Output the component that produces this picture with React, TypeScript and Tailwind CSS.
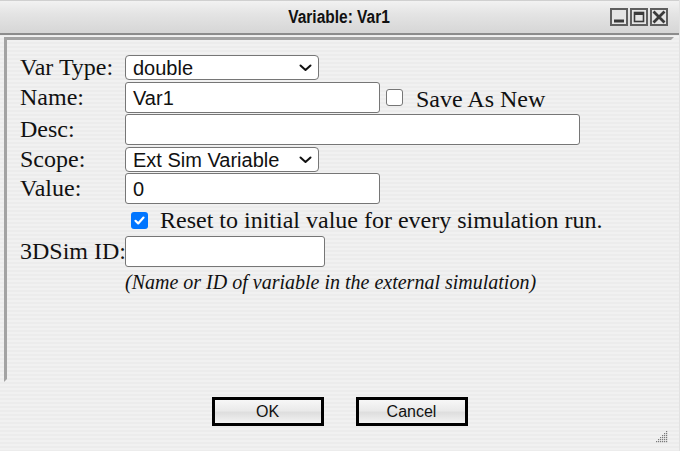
import React from "react";

const serif = { fontFamily: '"Liberation Serif", "Times New Roman", serif' };
const sans = { fontFamily: '"Liberation Sans", Arial, sans-serif' };

function Chevron() {
  return (
    <svg width="13" height="8" viewBox="0 0 13 8" className="shrink-0">
      <path d="M1.5 1.5 L6.5 6 L11.5 1.5" fill="none" stroke="#111" strokeWidth="2" strokeLinecap="round" strokeLinejoin="round" />
    </svg>
  );
}

function Select({ value, width }: { value: string; width: string }) {
  return (
    <div
      className={`${width} h-[25px] bg-white border border-[#767676] rounded-[4px] flex items-center justify-between pl-[7px] pr-[6px] text-[20px] text-[#111]`}
      style={sans}
    >
      <span className="leading-none">{value}</span>
      <Chevron />
    </div>
  );
}

function Input({ value, width }: { value?: string; width: string }) {
  return (
    <div
      className={`${width} h-[31px] bg-white border border-[#767676] rounded-[3px] flex items-center pl-[7px] text-[20px] text-[#111]`}
      style={sans}
    >
      <span className="leading-none">{value ?? ""}</span>
    </div>
  );
}

function Label({ children }: { children: React.ReactNode }) {
  return (
    <div className="w-[105px] shrink-0 text-[24px] leading-none text-[#111] whitespace-nowrap pb-[2px]" style={serif}>
      {children}
    </div>
  );
}

function WinButton({ kind }: { kind: "min" | "max" | "close" }) {
  return (
    <div className="w-[18px] h-[18px] border-2 border-[#5e5e5e] bg-[#e4e4e4] flex items-center justify-center">
      <svg width="14" height="14" viewBox="0 0 14 14">
        {kind === "min" && <rect x="2" y="9.5" width="10" height="3" fill="#3a3a3a" />}
        {kind === "max" && (
          <g>
            <rect x="2.5" y="2.5" width="9" height="9" fill="none" stroke="#3a3a3a" strokeWidth="1.6" />
            <rect x="2" y="2" width="10" height="3" fill="#3a3a3a" />
          </g>
        )}
        {kind === "close" && (
          <path d="M2.5 2.5 L11.5 11.5 M11.5 2.5 L2.5 11.5" stroke="#3a3a3a" strokeWidth="2.8" strokeLinecap="square" />
        )}
      </svg>
    </div>
  );
}

export default function App() {
  return (
    <div
      className="w-[680px] h-[451px] relative overflow-hidden flex flex-col bg-[repeating-linear-gradient(to_bottom,#f1f1f1_0px,#f1f1f1_2px,#ececec_2px,#ececec_4px)] border-r border-[#e2e2e2]"
    >
      {/* Title bar */}
      <div className="h-[35px] shrink-0 grid grid-cols-[1fr_auto_1fr] items-center border-t border-[#d0d0d0] border-b-2 border-b-[#8c8c8c] bg-[linear-gradient(to_bottom,#f2f2f2,#e4e4e4_40%,#d6d6d6)]">
        <div />
        <div
          className="text-[18px] font-bold text-[#111] leading-none scale-x-[0.86]"
          style={sans}
        >
          Variable: Var1
        </div>
        <div className="flex justify-end gap-[2px] pr-[11px]">
          <WinButton kind="min" />
          <WinButton kind="max" />
          <WinButton kind="close" />
        </div>
      </div>

      {/* Panel */}
      <div className="pl-[4px] pr-[5px] pt-[2px] shrink-0">
        <div className="h-[345px] border-[3px] border-t-[#a3a3a3] border-l-[#a3a3a3] border-r-transparent border-b-transparent pt-[15px] pl-[13px]">
          <div className="flex flex-col">
            <div className="flex items-center h-[25px] mb-[2px]">
              <Label>Var Type:</Label>
              <Select value="double" width="w-[194px]" />
            </div>
            <div className="flex items-center h-[31px] mb-[1px]">
              <Label>Name:</Label>
              <Input value="Var1" width="w-[255px]" />
              <div className="ml-[6px] w-[17px] h-[17px] border border-[#767676] rounded-[3px] bg-white" />
              <span className="ml-[13px] text-[24px] leading-none text-[#111] mt-[2px]" style={serif}>
                Save As New
              </span>
            </div>
            <div className="flex items-center h-[31px] mb-[2px]">
              <Label>Desc:</Label>
              <Input width="w-[455px]" />
            </div>
            <div className="flex items-center h-[25px] mb-[1px]">
              <Label>Scope:</Label>
              <Select value="Ext Sim Variable" width="w-[194px]" />
            </div>
            <div className="flex items-center h-[31px]">
              <Label>Value:</Label>
              <Input value="0" width="w-[255px]" />
            </div>
            <div className="flex items-center h-[32px] pl-[111px]">
              <div className="w-[17px] h-[17px] rounded-[3px] bg-[#0075ff] flex items-center justify-center">
                <svg width="13" height="13" viewBox="0 0 13 13">
                  <path d="M2.5 6.8 L5.2 9.4 L10.5 3.6" fill="none" stroke="#fff" strokeWidth="2.2" strokeLinecap="round" strokeLinejoin="round" />
                </svg>
              </div>
              <span className="ml-[12px] text-[24px] leading-none text-[#111]" style={serif}>
                Reset to initial value for every simulation run.
              </span>
            </div>
            <div className="flex items-center h-[31px]">
              <Label>3DSim ID:</Label>
              <Input width="w-[200px]" />
            </div>
            <div className="pl-[105px] mt-[5px] text-[20px] italic leading-none text-[#111]" style={serif}>
              (Name or ID of variable in the external simulation)
            </div>
          </div>
        </div>
      </div>

      {/* Buttons */}
      <div className="flex justify-center gap-[32px] mt-[15px]">
        {["OK", "Cancel"].map((t) => (
          <div
            key={t}
            className="w-[112px] h-[29px] border-[3px] border-black flex items-center justify-center text-[16px] text-[#111] bg-[linear-gradient(to_bottom,#f7f7f7,#eaeaea_45%,#dedede_55%,#f3f3f3)]"
            style={sans}
          >
            {t}
          </div>
        ))}
      </div>

      {/* Resize grip */}
      <svg className="absolute right-[10px] bottom-[8px]" width="13" height="12" viewBox="0 0 13 12">
        {[0, 1, 2, 3, 4, 5].map((i) =>
          [0, 1, 2, 3, 4, 5].map((j) =>
            i + j >= 5 ? <rect key={`${i}-${j}`} x={i * 2} y={j * 2} width="1.2" height="1.2" fill="#7a7a7a" /> : null
          )
        )}
      </svg>
    </div>
  );
}
